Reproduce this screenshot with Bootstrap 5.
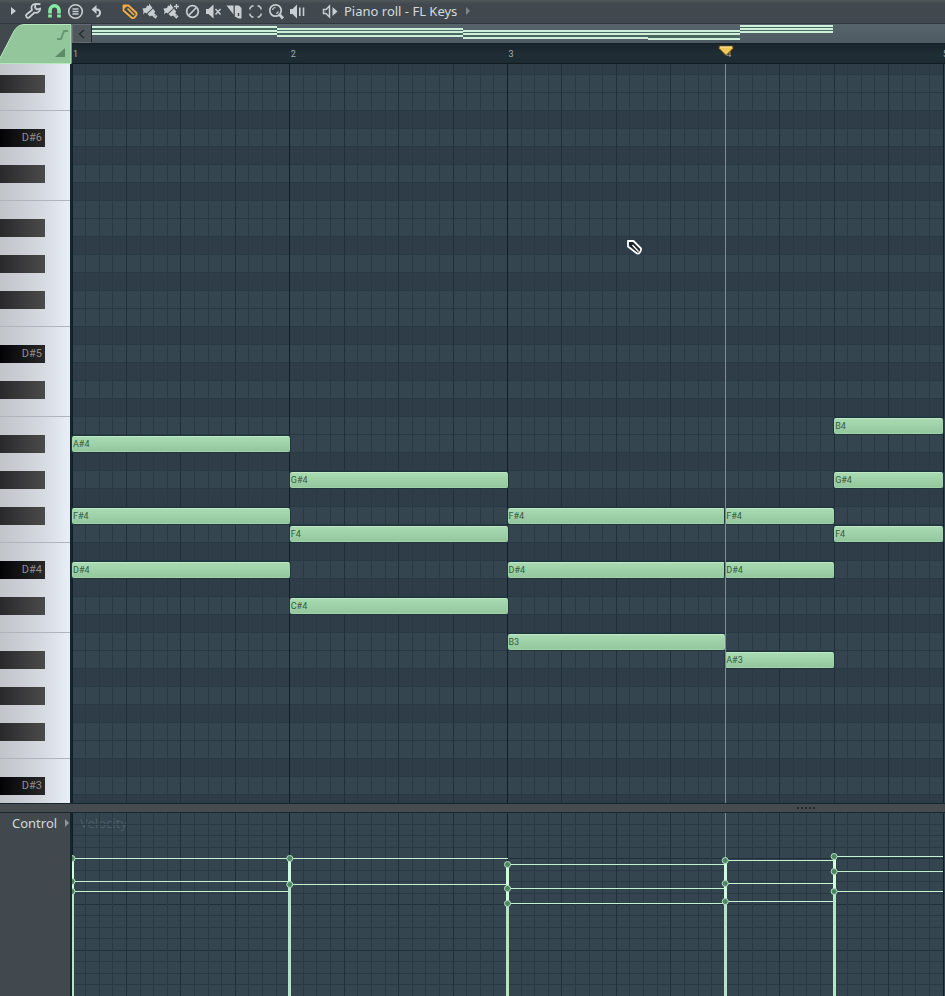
<!DOCTYPE html>
<html lang="en">
<head>
<meta charset="utf-8">
<meta name="viewport" content="width=device-width, initial-scale=1">
<title>Piano roll - FL Keys</title>
<link href="https://cdn.jsdelivr.net/npm/bootstrap@5.3.0/dist/css/bootstrap.min.css" rel="stylesheet">
<style>
body{background:#42494e;font-family:"Noto Sans","Open Sans",sans-serif;font-size:13px;line-height:20px;color:#d5dadd}
.toolbar{height:24px;background:linear-gradient(#50575b 0,#42494e 4px,#42494e);flex:none;padding:0 0 2px 2px;border-bottom:1px solid #30393f}
.tool{width:21px;height:22px;border:0;padding:0;background:none;color:#c8ced1;flex:none}
.tool svg{display:block;width:21px;height:22px;fill:none;stroke:currentColor;stroke-width:2}
.tool-on{color:#84eba4}
.tool-draw{color:#f0ae48}
.gap-tools{margin-left:12px}
.roll-title{padding-left:3px}
.side{width:72px;flex:none}
.corner{height:40px;background:#343d42}
.corner svg{display:block}
.mini{height:20px;background:linear-gradient(#58646b,#4d5a61);border-bottom:1px solid #141f25}
.scroll-left{width:20px;border:1px solid #636c71;border-right-color:#222d33;padding:0;background:#50585d;color:#232e34;flex:none}
.scroll-left svg{display:block;margin:auto}
.ruler{height:20px;background:linear-gradient(#19242b,#202e36 60%,#1c2a32);border-bottom:1px solid #0f1a21;color:#a3adb2;font:9px/20px "Roboto",sans-serif;display:grid;grid-template-columns:repeat(4,1fr) 2px}
.ruler span{padding-left:1px;overflow:hidden;white-space:nowrap}
.ruler .bar-end{padding-left:0}
.rows{display:grid;grid-template-rows:11px repeat(40,18px) 8px}
.keys{background:linear-gradient(90deg,#c1c5ca,#d5d9e0 60%,#e7edf6 96%);border-right:2px solid #16242d;font:11px/18px "Roboto",sans-serif;color:#8f8f8f}
.key-edge{border-bottom:1px solid #b0b5bd}
.key-black{width:45px;background:linear-gradient(90deg,#29292b,#4b4b4c);padding-right:3px;text-align:right}
.key-named{background:linear-gradient(90deg,#030305,#282829)}
.canvas-area{margin-right:2px}
.canvas-edge{background:#34444e}
.roll{grid-template-columns:repeat(64,1fr)}
.lane{grid-column:1/-1;border-bottom:1px solid #283a45;background:#2e3d48}
.lane-in{background:#34454f}
.note{margin:1px 0;min-width:0;border-radius:2px;border:1px solid #a1d2a9;border-top-color:#bfe8c7;background:linear-gradient(#a9dbb2,#95c79e);box-shadow:0 0 0 1px #21363a;color:#335c3d;font:9px/14px "Roboto",sans-serif;white-space:nowrap;z-index:2}
.overlay{position:absolute;left:0;top:0;width:100%;height:100%;pointer-events:none;overflow:visible;z-index:1}
.above{z-index:4;overflow:hidden}
.playhead{position:absolute;left:75%;top:0;bottom:0;width:1px;background:#7d8c95;z-index:3}
.marker{position:absolute;left:75%;top:0;margin-left:-9px;z-index:4}
.cursor{position:absolute;left:64%;top:175px;margin-left:-3px;z-index:4}
.splitter{height:10px;background:#454b4f;border-top:1px solid #18262f;border-bottom:1px solid #18262f;flex:none}
.grip{width:19px;height:2px;margin-left:83%;background:repeating-linear-gradient(90deg,#22282c 0 2px,transparent 2px 4px)}
.velocity{background:#34454f;min-height:183px}
.control{padding:0 0 0 12px;border:0;background:none;color:#d5dadd}
.vlabel{color:#4b5c66;padding-left:8px}
.edge-dark{border-right:2px solid #16242d}
.step{stroke:#293a45}.beat{stroke:#1f303b}.bar-line{stroke:#0f1f29}
.v-line{stroke:#c3f1d1}
</style>
<script src="https://cdn.jsdelivr.net/npm/bootstrap@5.3.0/dist/js/bootstrap.bundle.min.js"></script>
</head>
<body>
<div class="d-flex flex-column min-vh-100 overflow-hidden">
<header class="toolbar d-flex align-items-center">
  <button class="tool" aria-label="Menu"><svg viewBox="0 0 21 22"><path d="M9 7l5 4-5 4z" fill="currentColor" stroke="none"/></svg></button>
  <button class="tool" aria-label="Tools"><svg viewBox="0 0 21 22"><path d="M12.500 3.800C9 4 7.500 7 9 10l-5.500 4.500c-1.500 1.500.8 4.500 2.800 2.800L11.500 12.500c3 1 5.500-.8 5.700-4l-3.200 1-2-2zM13 4l4.500.2" stroke-width="1.800" stroke-linejoin="round"/></svg></button>
  <button class="tool tool-on" aria-label="Snap to grid"><svg viewBox="0 0 21 22"><path d="M6 17.500V10.500a4.500 4.700 0 0 1 9 0v7" stroke-width="3.600"/><path d="M3.500 14h5M12.500 14h5" stroke="#42494e" stroke-width="1"/></svg></button>
  <button class="tool" aria-label="Stamp"><svg viewBox="0 0 21 22"><circle cx="10.500" cy="11.500" r="6.800" stroke-width="1.600"/><path d="M7.500 9h6M7.500 11.500h6M7.500 14h6" stroke-width="1.300"/></svg></button>
  <button class="tool" aria-label="Undo"><svg viewBox="0 0 21 22"><path d="M9 9.500h1.500c5 0 4.500 6.500 0 7"/><path d="M10.500 5v9L5.500 9.500z" fill="currentColor" stroke="none"/></svg></button>
  <button class="tool tool-draw gap-tools" aria-label="Draw"><svg viewBox="0 0 21 22"><path d="M4.500 5.500h5l8 7.500c.8 2-2.500 6-4.500 5L4.500 10.500z" stroke-width="1.800" stroke-linejoin="round"/><path d="M8.500 8.500l6.500 6.500" stroke-width="1.700"/><path d="M4 5h5L4.500 9.500z" fill="currentColor" stroke="none"/></svg></button>
  <button class="tool" aria-label="Paint"><svg viewBox="0 0 21 22"><path d="M2.500 8.500L6 8l1-2.500 2 .5V3.500l3.500 4.500-6 5.500-1.500-1-2 2 .5-3z M7.500 14L13 8.800l2.200 2.700-1 1.700 3.300 3-2.200 2.600-3.300-3.200-2 .8z" fill="currentColor" stroke="none"/><path d="M14.800 15.600l.6.6" stroke="#42494e" stroke-width="1.200"/></svg></button>
  <button class="tool" aria-label="Paint sequence"><svg viewBox="0 0 21 22"><path d="M2.500 8.500L6 8l1-2.500 2 .5V3.500l3.500 4.500-6 5.500-1.500-1-2 2 .5-3z M7.500 14L13 8.800l2.200 2.700-1 1.700 3.300 3-2.200 2.600-3.300-3.200-2 .8z" fill="currentColor" stroke="none"/><path d="M14.800 15.600l.6.6" stroke="#42494e" stroke-width="1.200"/><path d="M15.500 4v5M13 6.500h5" stroke-width="1.300"/></svg></button>
  <button class="tool" aria-label="Delete"><svg viewBox="0 0 21 22"><circle cx="10.500" cy="11.500" r="5.800" stroke-width="1.700"/><path d="M6.500 15.500l8-8" stroke-width="1.700"/></svg></button>
  <button class="tool" aria-label="Mute"><svg viewBox="0 0 21 22"><path d="M3 9h2.500l5-4.500v14l-5-4.500H3z" fill="currentColor" stroke="none"/><path d="M12.500 9l5 5.500M17.500 9l-5 5.500" stroke-width="1.500"/></svg></button>
  <button class="tool" aria-label="Slice"><svg viewBox="0 0 21 22"><path d="M2.500 5.500h7v9z" fill="currentColor" stroke="none"/><path d="M10.800 5.500h4.200l2.500 2.500v10.500h-3l-3.700-2z" fill="currentColor" stroke="none"/><path d="M14.500 13v3" stroke="#42494e" stroke-width="1.500"/></svg></button>
  <button class="tool" aria-label="Select"><svg viewBox="0 0 21 22"><path d="M5 9.500V8l2-2h1.500M12.500 6H14l2 2v1.500M16 13.500V15l-2 2h-1.500M8.500 17H7l-2-2v-1.500" stroke-width="1.500"/></svg></button>
  <button class="tool" aria-label="Zoom"><svg viewBox="0 0 21 22"><circle cx="9.500" cy="10.500" r="5.700" stroke-width="1.700"/><path d="M13 14l4 4.500" stroke-width="2.800"/><path d="M6.500 10a3 3 0 0 1 3-2.500M10 13.500a3 3 0 0 0 2.500-2" stroke-width="1.200"/></svg></button>
  <button class="tool" aria-label="Playback"><svg viewBox="0 0 21 22"><path d="M3 9h2.500l4.500-4.500v14L5.500 14H3z" fill="currentColor" stroke="none"/><path d="M12.800 7.500v8.500M16.500 7.500v8.500" stroke-width="1.600"/></svg></button>
  <button class="tool gap-tools" aria-label="Channel"><svg viewBox="0 0 21 22"><path d="M3.500 9.500H6L9.500 6v11L6 13.500H3.500z" stroke-width="1.500"/><path d="M12.500 7l5 4.500-5 4.500z" fill="currentColor" stroke="none"/></svg></button>
  <span class="roll-title">Piano roll - FL Keys</span>
  <svg class="ms-2" width="6" height="10" aria-hidden="true"><path d="M1 1l4 4-4 4z" fill="#7c868b"/></svg>
</header>

<section class="d-flex flex-shrink-0">
  <div class="side d-flex flex-column">
    <div class="corner"><svg width="72" height="40" aria-hidden="true">
      <path d="M0 0H21Q17 1 14 6L0 36z" fill="#42494e"/>
      <path d="M-1 40V36L14 7Q18 .5 24 .5H71V39.500H0z" fill="#94c69b" stroke="#b7e8bd"/>
      <path d="M57 15h4l3-8h4" fill="none" stroke="#659871" stroke-width="2"/>
      <path d="M65 24v9H55z" fill="#5d8b67"/></svg></div>
    <div class="keys rows flex-grow-1" id="keys"></div>
  </div>
  <main class="flex-grow-1 d-flex flex-column">
    <div class="mini d-flex">
      <button class="scroll-left" aria-label="Scroll left"><svg width="10" height="12"><path d="M7 2L2.500 6 7 10" fill="none" stroke="currentColor" stroke-width="1.500"/></svg></button>
      <svg class="flex-grow-1" width="100" height="19" viewBox="0 0 853 19" preserveAspectRatio="none" id="map" shape-rendering="crispEdges"></svg>
    </div>
    <div class="ruler position-relative"><span>1</span><span>2</span><span>3</span><span>4</span><span class="bar-end">5</span>
      <svg class="marker" width="17" height="13" aria-hidden="true"><path d="M1 2h14v2.500L8 11.500 1 4.500z" fill="#edc757" stroke="#513f1c"/><path d="M2 3h12" stroke="#f9e79c"/></svg>
    </div>
    <div class="canvas-edge flex-grow-1">
      <div class="canvas-area position-relative">
        <div class="roll rows" id="roll"></div>
        <svg class="overlay grid-lines" shape-rendering="crispEdges"></svg>
        <div class="playhead"></div>
        <svg class="cursor" width="17" height="18" aria-hidden="true"><path d="M2 2h5.500l7.500 7.500c.8 2-2 6-4 5L2 7.500z" fill="#1c2328" stroke="#fff" stroke-width="1.800" stroke-linejoin="round"/><path d="M6.500 6l6 6.500" stroke="#fff" stroke-width="1.300"/></svg>
      </div>
    </div>
  </main>
</section>

<div class="splitter d-flex align-items-center"><div class="side"></div><div class="flex-grow-1"><div class="grip"></div></div></div>

<section class="d-flex flex-grow-1">
  <div class="side edge-dark"><button class="control d-flex align-items-center">Control<svg class="ms-2" width="6" height="10" aria-hidden="true"><path d="M0 1l4 4-4 4z" fill="#8d969a"/></svg></button></div>
  <div class="velocity flex-grow-1 d-flex">
    <div class="canvas-area position-relative flex-grow-1">
      <svg class="overlay grid-lines" data-levels="16" shape-rendering="crispEdges"></svg>
      <div class="vlabel">Velocity</div>
      <div class="playhead"></div>
      <svg class="overlay above" id="vel"></svg>
    </div>
  </div>
</section>
</div>
<script>
const names = ['C','C#','D','D#','E','F','F#','G','G#','A','A#','B'];
const inScale = [1,3,5,6,8,10,11];      // D# natural minor
const TOP = 91, ROWS = 42, STEPS = 64;
// pitch, first step, length in steps
const notes = [[70,0,16],[66,0,16],[63,0,16],[68,16,16],[65,16,16],[61,16,16],
  [66,32,16],[63,32,16],[59,32,16],[66,48,8],[63,48,8],[58,48,8],[71,56,8],[68,56,8],[65,56,8]];
const label = p => names[p % 12] + (Math.floor(p / 12) - 1);

let keys = '', roll = '';
for (let r = 0; r < ROWS; r++) {
  const p = TOP - r, n = p % 12;
  const black = names[n].length > 1;
  const cls = black ? 'key-black' + (n === 3 ? ' key-named' : '') : (n === 5 || n === 0 ? 'key-edge' : '');
  keys += `<div class="${cls}">${n === 3 ? label(p) : ''}</div>`;
  roll += `<div class="lane${inScale.includes(n) ? ' lane-in' : ''}" style="grid-row:${r + 1}"></div>`;
}
for (const [p, s, l] of notes)
  roll += `<div class="note" style="grid-row:${TOP - p + 1};grid-column:${s + 1}/span ${l}">${label(p)}</div>`;
document.getElementById('keys').innerHTML = keys;
document.getElementById('roll').innerHTML = roll;

document.querySelectorAll('.grid-lines').forEach(svg => {
  let out = '';
  const levels = +svg.dataset.levels || 0;
  for (let i = 1; i < levels; i++) {
    const y = i / levels * 100;
    out += `<line x1="0" x2="100%" y1="${y}%" y2="${y}%" class="${i % 4 ? 'step' : 'beat'}"/>`;
  }
  for (const kind of ['step', 'beat', 'bar-line'])
    for (let i = 0; i <= STEPS; i++) {
      if ((i % 16 ? (i % 4 ? 'step' : 'beat') : 'bar-line') !== kind) continue;
      const x = i / STEPS * 100;
      out += `<line x1="${x}%" x2="${x}%" y1="0" y2="100%" class="${kind}"/>`;
    }
  svg.innerHTML = out;
});

let map = '';
for (const s of [0,16,32,48,56]) {
  const g = notes.filter(n => n[1] === s), ys = g.map(n => 73 - n[0]);
  const x = s * 11.58, w = g[0][2] * 11.58;
  map += `<rect x="${x}" y="${ys[0]}" width="${w}" height="${ys[2] - ys[0]}" fill="#4a675f"/>`;
  for (const y of ys) map += `<rect x="${x}" y="${y - 1}" width="${w}" height="2" fill="#cdf0da"/>`;
}
document.getElementById('map').innerHTML = map;

const groups = [[0,16,[45,68,78]],[16,16,[45,71]],[32,16,[51,75,90]],[48,8,[47,70,88]],[56,8,[43,58,78]]];
let v = '', dots = '';
for (const [s, l, ys] of groups) {
  const x = s / STEPS * 100, x2 = (s + l) / STEPS * 100, low = ys[ys.length - 1];
  v += `<g shape-rendering="crispEdges">`;
  for (const y of ys) v += `<line x1="${x}%" x2="${x2}%" y1="${y}.5" y2="${y}.5" class="v-line"/>`;
  v += `<line x1="${x}%" x2="${x}%" y1="${ys[0]}" y2="100%" stroke="#b5e3c5" stroke-width="3"/>`;
  v += `<line x1="${x}%" x2="${x}%" y1="${ys[0]}" y2="${low}" stroke="#cdfbdc" stroke-width="3"/></g>`;
  for (const y of ys) dots += `<circle cx="${x}%" cy="${y}.5" r="3" fill="#4c8560" stroke="#b3e2c0"/>`;
}
document.getElementById('vel').innerHTML = v + dots;
</script>
</body>
</html>
